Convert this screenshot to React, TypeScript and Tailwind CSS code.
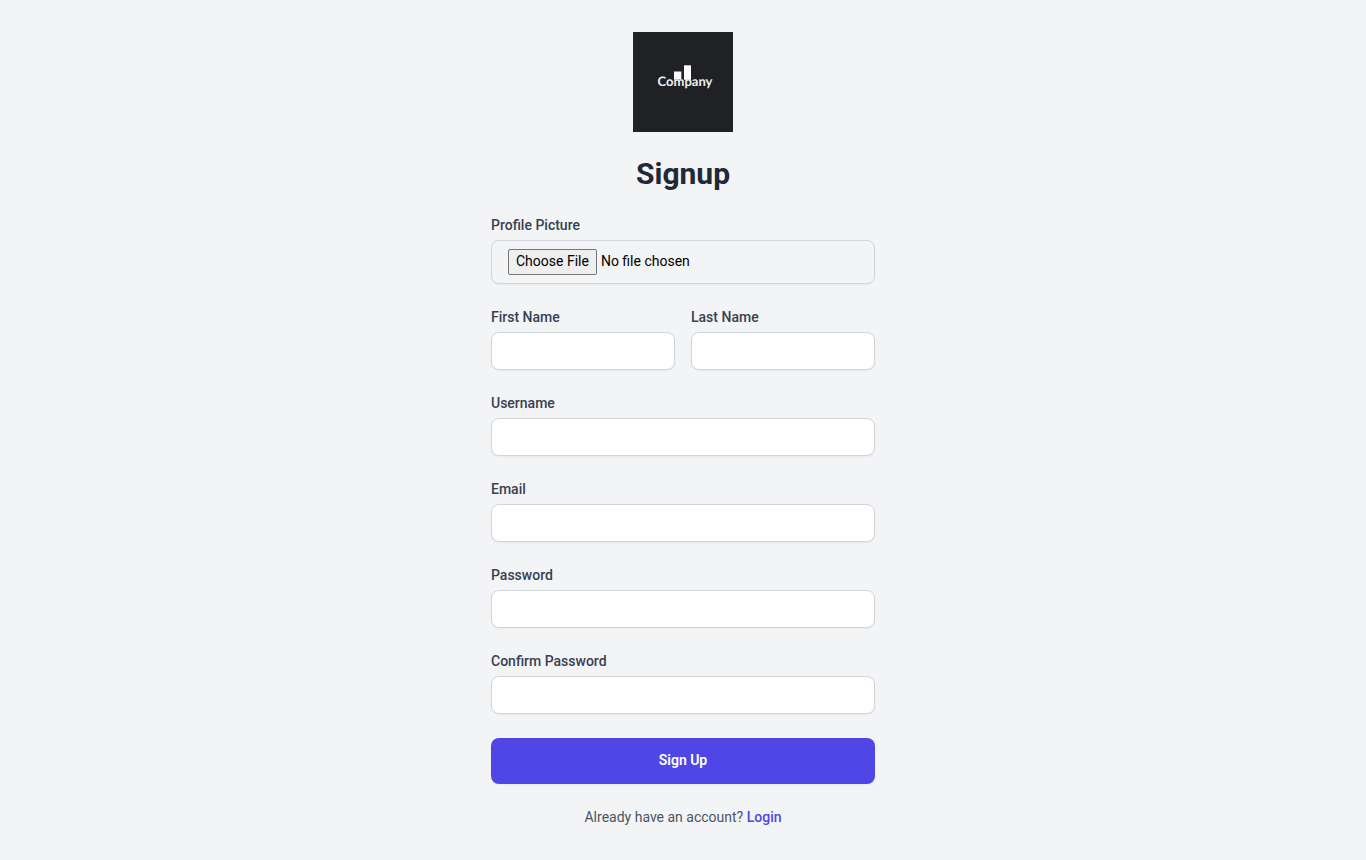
import React from "react";

const labelClass = "block text-sm leading-[18px] font-medium text-[#374151]";
const boxClass =
  "mt-[6px] block w-full rounded-lg border border-[#d1d5db] px-4 py-2 text-sm shadow-xs focus:border-[#4f46e5] focus:outline-none";

interface FieldProps {
  id: string;
  label: string;
  type?: string;
}

function Field({ id, label, type = "text" }: FieldProps) {
  return (
    <div>
      <label htmlFor={id} className={labelClass}>
        {label}
      </label>
      <input id={id} name={id} type={type} className={`${boxClass} bg-white`} />
    </div>
  );
}

function Logo() {
  return (
    <svg
      viewBox="0 0 100 100"
      role="img"
      aria-label="Company"
      className="mx-auto size-[100px]"
    >
      <rect width="100" height="100" fill="#1f2124" />
      <rect x="41" y="39.5" width="7.3" height="8" fill="#f8f8f8" />
      <rect x="51" y="33.3" width="7" height="14.5" fill="#fff" />
      <text
        x="52"
        y="54"
        textAnchor="middle"
        fill="#f1f1f1"
        textRendering="geometricPrecision"
        className="font-[Lato,sans-serif] text-[13px] font-bold"
      >
        Company
      </text>
    </svg>
  );
}

export default function App() {
  return (
    <main className="flex min-h-screen items-center justify-center bg-[#f3f4f6] px-4 py-8 font-[Roboto,sans-serif]">
      <div className="w-full max-w-sm">
        <Logo />
        <h1 className="mt-6 text-center text-3xl font-bold text-[#1f2937]">Signup</h1>
        <form className="mt-6 space-y-6" onSubmit={(e: React.FormEvent) => e.preventDefault()}>
          <div>
            <label htmlFor="profilePicture" className={labelClass}>
              Profile Picture
            </label>
            <input
              id="profilePicture"
              name="profilePicture"
              type="file"
              accept="image/*"
              className={`${boxClass} text-black file:rounded-xs file:border file:border-solid file:border-[#767676] file:bg-[#efefef] file:px-[7px] file:pt-[1px] file:pb-[3px]`}
            />
          </div>
          <div className="grid grid-cols-2 gap-4">
            <Field id="firstName" label="First Name" />
            <Field id="lastName" label="Last Name" />
          </div>
          <Field id="username" label="Username" />
          <Field id="email" label="Email" type="email" />
          <Field id="password" label="Password" type="password" />
          <Field id="confirmPassword" label="Confirm Password" type="password" />
          <button
            type="submit"
            className="w-full cursor-pointer rounded-lg border border-transparent bg-[#4f46e5] px-4 pt-[11px] pb-[13px] text-sm font-semibold text-white shadow-xs hover:bg-[#4338ca]"
          >
            Sign Up
          </button>
        </form>
        <p className="mt-6 pb-[2px] text-center text-sm leading-[18px] text-[#4b5563]">
          Already have an account?{" "}
          <a href="#login" className="font-medium text-[#4f46e5] hover:underline">
            Login
          </a>
        </p>
      </div>
    </main>
  );
}
